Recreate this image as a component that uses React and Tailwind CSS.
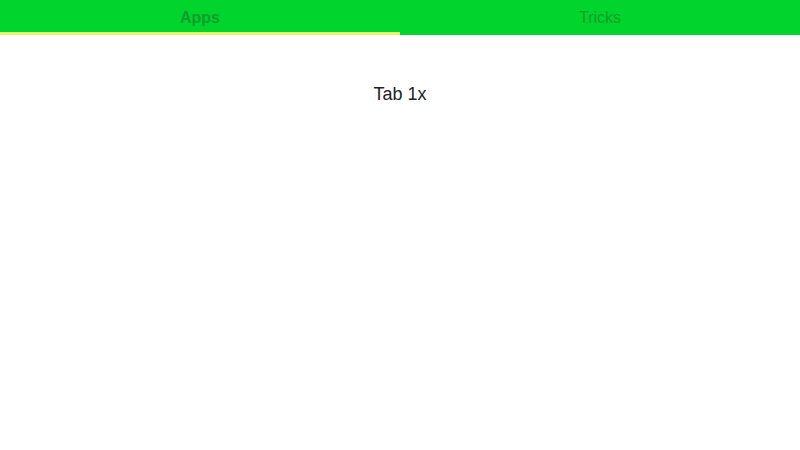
import React, { useState } from 'react';

const tabs = ['Apps', 'Tricks'];

const App = () => {
    const [active, setActive] = useState(0);

    return (
        <div className="w-full min-h-screen bg-white" style={{ fontFamily: '"Liberation Sans", Arial, sans-serif' }}>
            {/* Tab bar */}
            <div className="flex h-[35px] bg-[#00d42d]">
                {tabs.map((tab, i) => (
                    <button
                        key={tab}
                        onClick={() => setActive(i)}
                        className={`flex-1 flex items-center justify-center pt-[3px] text-[16px] text-[#0b9f2a] border-b-[3px] ${active === i ? 'font-bold border-[#e4f76a]' : 'font-normal border-transparent'}`}
                    >
                        {tab}
                    </button>
                ))}
            </div>

            {/* Tab content */}
            <div className="flex justify-center pt-[47px]">
                <p className="text-[18px] text-[#222222] leading-[24px]">Tab {active + 1}x</p>
            </div>
        </div>
    );
};

export default App;
